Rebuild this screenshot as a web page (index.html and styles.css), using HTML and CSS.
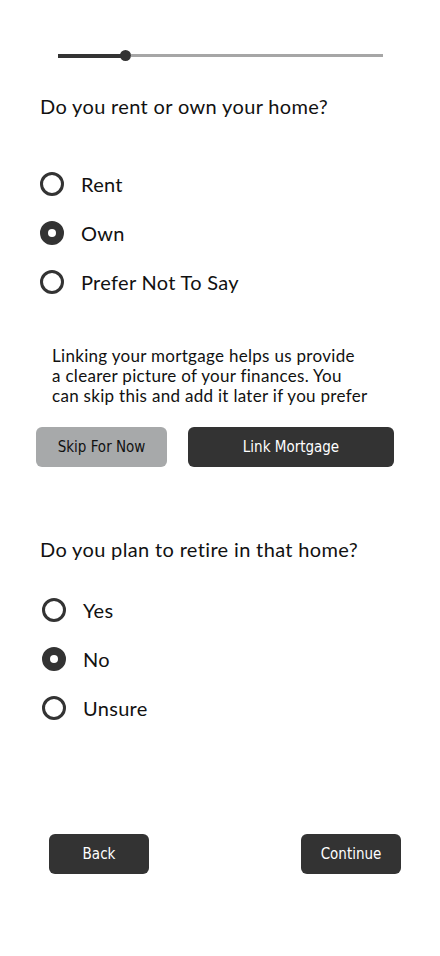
FILE: index.html
```html
<!DOCTYPE html>
<html lang="en">
<head>
  <meta charset="UTF-8" />
  <meta name="viewport" content="width=device-width, initial-scale=1.0"/>
  <title>Home Questions</title>
  <link rel="stylesheet" href="styles.css">
</head>
<body>

  <div class="progress">
    <div class="progress-fill"></div>
    <div class="progress-knob"></div>
    <div class="progress-rest"></div>
  </div>

  <section class="question first">
    <h2>Do you rent or own your home?</h2>
    <div class="options">
      <label class="option"><span class="radio"></span>Rent</label>
      <label class="option"><span class="radio checked"></span>Own</label>
      <label class="option"><span class="radio"></span>Prefer Not To Say</label>
    </div>
  </section>

  <p class="note">Linking your mortgage helps us provide<br>a clearer picture of your finances. You<br>can skip this and add it later if you prefer</p>

  <div class="link-actions">
    <button class="btn btn-light skip">Skip For Now</button>
    <button class="btn link">Link Mortgage</button>
  </div>

  <section class="question second">
    <h2>Do you plan to retire in that home?</h2>
    <div class="options">
      <label class="option"><span class="radio"></span>Yes</label>
      <label class="option"><span class="radio checked"></span>No</label>
      <label class="option"><span class="radio"></span>Unsure</label>
    </div>
  </section>

  <div class="nav-actions">
    <button class="btn nav">Back</button>
    <button class="btn nav">Continue</button>
  </div>

</body>
</html>
```

FILE: styles.css
```css
:root {
  --dark: #333333;
  --gray: #a7a9aa;
  --track: #a6a6a6;
  --text: #111111;
}

body {
  margin: 0;
  background: #fff;
  color: var(--text);
  font-family: 'Lato', 'Open Sans', sans-serif;
}

.progress {
  display: flex;
  align-items: center;
  margin: 50px 57px 0 58px;
  height: 11px;
}

.progress-fill {
  width: 64px;
  height: 4px;
  background: var(--dark);
}

.progress-knob {
  width: 11px;
  height: 11px;
  border-radius: 50%;
  background: var(--dark);
  margin-left: -2px;
}

.progress-rest {
  flex: 1;
  height: 3px;
  background: var(--track);
}

.question h2 {
  font-size: 20px;
  font-weight: 400;
  letter-spacing: 0.35px;
  margin: 0;
  line-height: 24px;
}

.question.first {
  margin: 33px 0 0 40px;
}

.question.second {
  margin: 70px 0 0 40px;
}

.options {
  display: flex;
  flex-direction: column;
  gap: 25px;
}

.first .options {
  margin-top: 54px;
}

.second .options {
  margin-top: 37px;
  margin-left: 2px;
}

.option {
  display: flex;
  align-items: center;
  gap: 17px;
  font-size: 20px;
  letter-spacing: 0.3px;
  line-height: 24px;
}

.radio {
  box-sizing: border-box;
  width: 24px;
  height: 24px;
  border-radius: 50%;
  border: 3px solid var(--dark);
  display: flex;
  align-items: center;
  justify-content: center;
}

.radio.checked {
  background: var(--dark);
}

.radio.checked::after {
  content: '';
  width: 8px;
  height: 8px;
  border-radius: 50%;
  background: #fff;
}

.note {
  margin: 52px 20px 0 52px;
  font-size: 17px;
  letter-spacing: 0.3px;
  line-height: 20px;
}

.btn {
  height: 40px;
  border: none;
  border-radius: 6px;
  background: var(--dark);
  color: #fff;
  font-family: 'DejaVu Sans Condensed', 'DejaVu Sans', sans-serif;
  font-size: 15px;
  padding: 0;
}

.btn-light {
  background: var(--gray);
  color: #111;
}

.link-actions {
  display: flex;
  gap: 21px;
  margin: 21px 46px 0 36px;
}

.skip {
  width: 131px;
}

.link {
  flex: 1;
}

.nav-actions {
  display: flex;
  justify-content: space-between;
  margin: 114px 39px 0 49px;
}

.nav {
  width: 100px;
}
```
